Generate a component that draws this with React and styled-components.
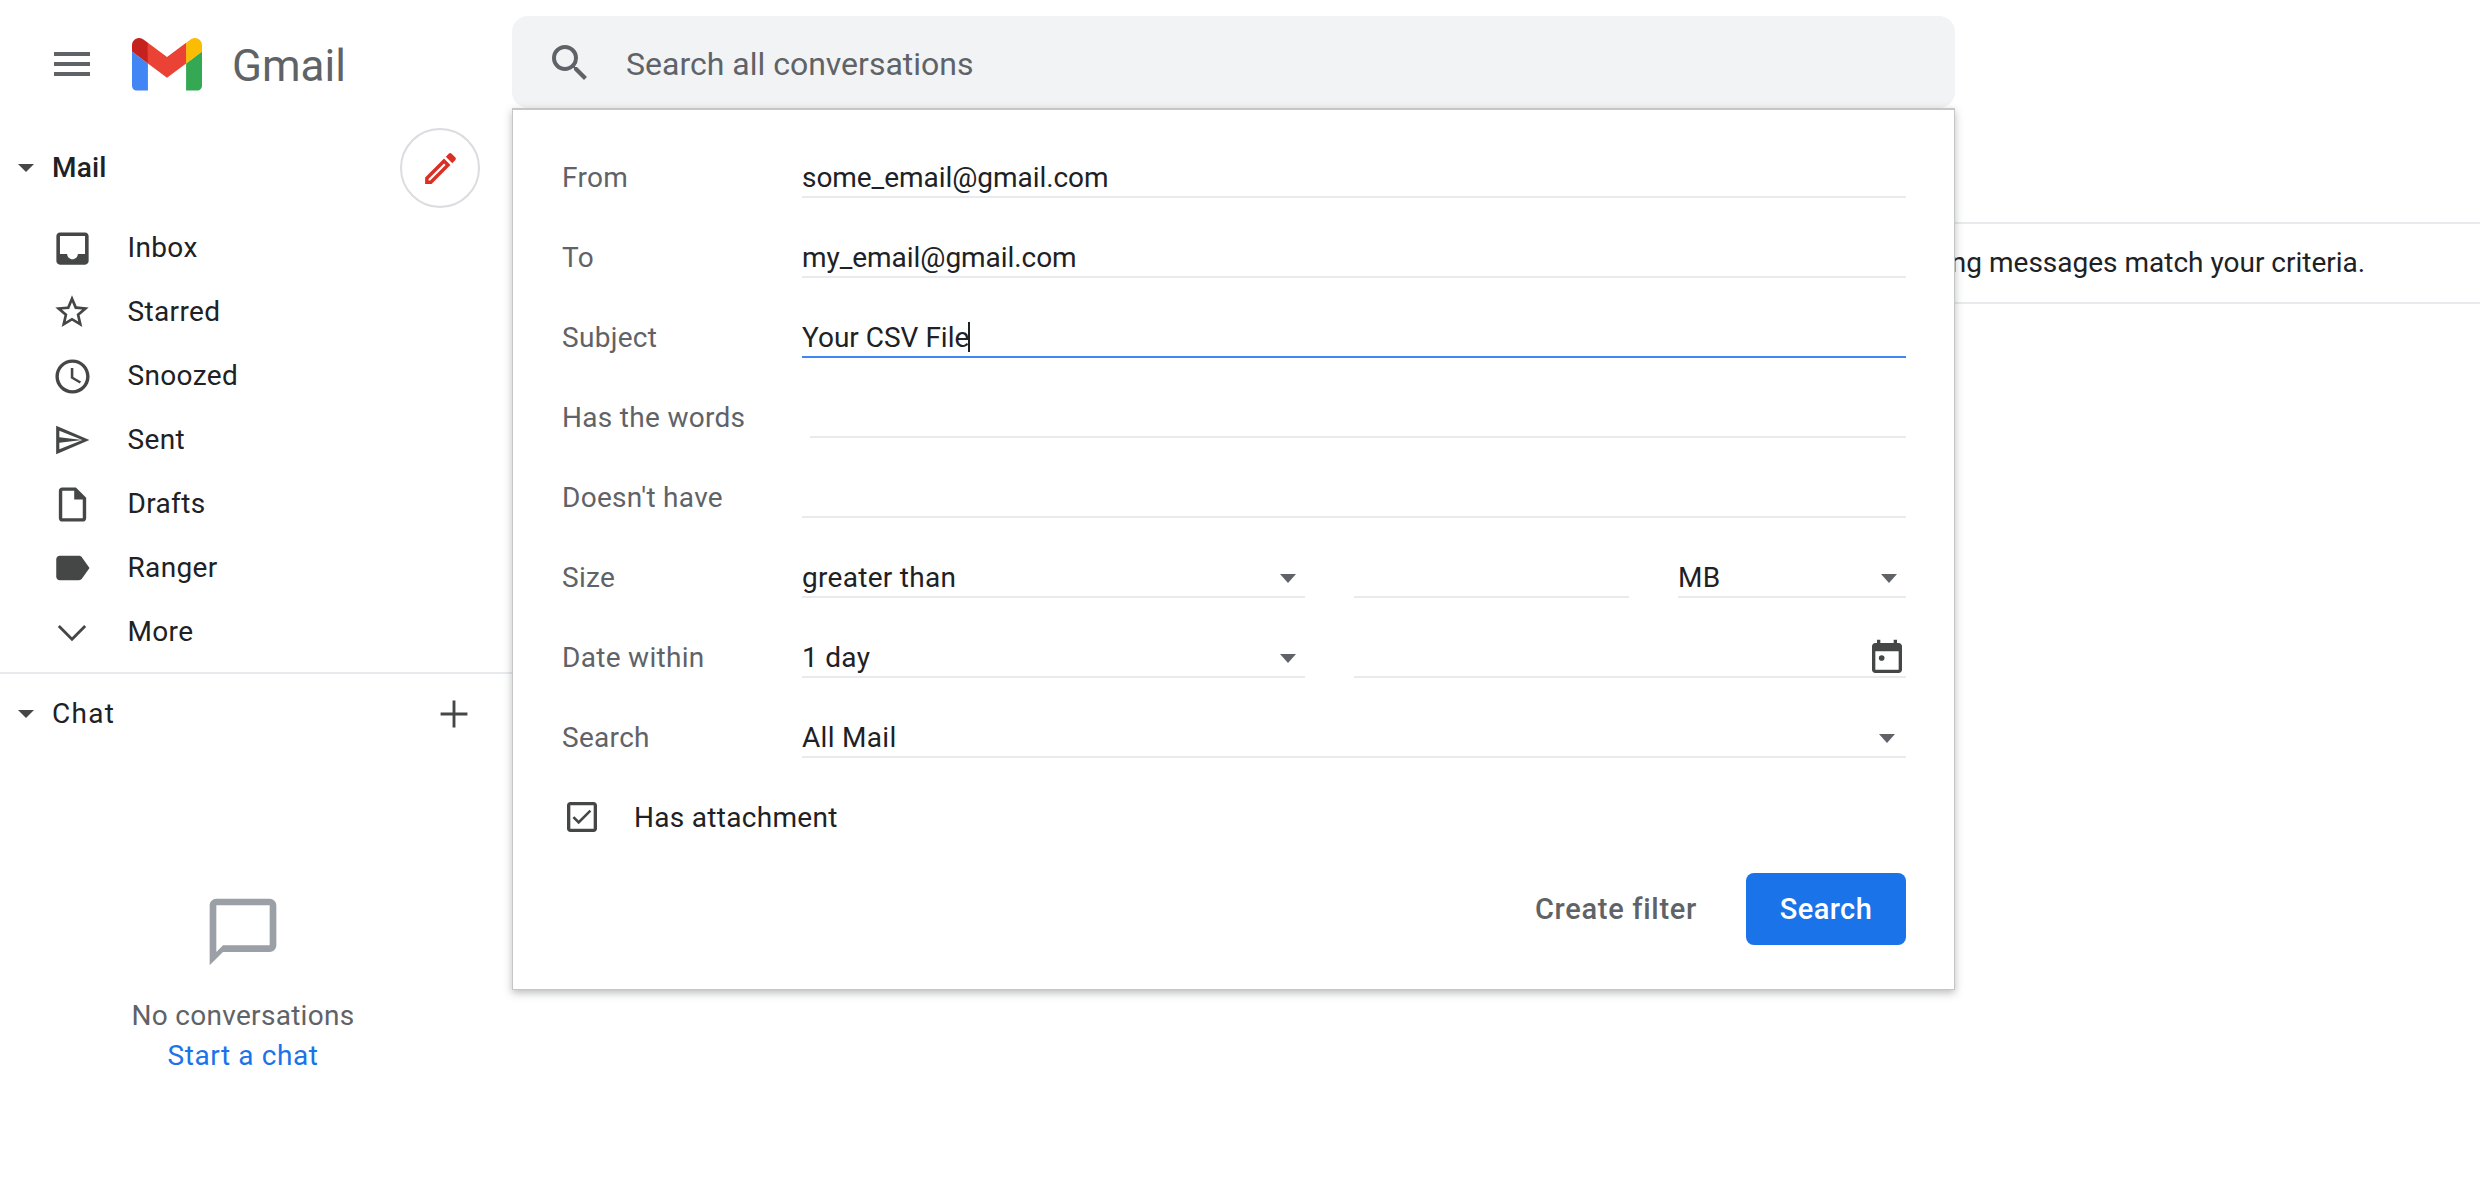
import React from 'react';
import styled, { createGlobalStyle } from 'styled-components';

const Global = createGlobalStyle`
  html, body { margin: 0; padding: 0; background: #fff; }
  body { font-family: Roboto, "Liberation Sans", sans-serif; color: #202124; -webkit-font-smoothing: antialiased; }
  * { box-sizing: border-box; }
`;

const Page = styled.div`display: flex; width: 2480px; height: 1182px; overflow: hidden; background: #fff;`;
const Sidebar = styled.aside`width: 512px; flex: none; display: flex; flex-direction: column;`;
const Brand = styled.div`height: 128px; padding: 40px 0 0 48px; display: flex; align-items: flex-start;`;
const MenuButton = styled.div`width: 48px; height: 48px; display: flex; color: #5f6368;`;
const Logo = styled.svg`width: 70px; height: 52.5px; margin: -2px 0 0 36px; flex: none;`;
const Wordmark = styled.span`margin: 2px 0 0 30px; font-size: 44px; line-height: 48px; color: #5f6368;`;
const SectionHead = styled.div`display: flex; align-items: center; height: ${p => p.$h}px; padding-left: 18px; padding-right: ${p => p.$pr}px; margin-bottom: ${p => p.$mb || 0}px;`;
const SectionCaret = styled.svg`width: 16px; height: 8px; flex: none; fill: #444746;`;
const SectionTitle = styled.span`margin-left: 18px; flex: 1; font-size: 28px; line-height: 36px; font-weight: ${p => p.$weight}; letter-spacing: ${p => p.$ls}px; color: #202124;`;
const Compose = styled.div`width: 80px; height: 80px; border: 2px solid #dadce0; border-radius: 50%; display: flex; align-items: center; justify-content: center; color: #d93025;`;
const NavList = styled.nav`display: flex; flex-direction: column;`;
const NavRow = styled.div`height: 64px; display: flex; align-items: center; padding-left: 44px;`;
const NavIcon = styled.div`width: 56px; display: flex; justify-content: center; align-items: center; color: #444746; flex: none;`;
const NavLabel = styled.span`margin-left: 27.5px; font-size: 28px; line-height: 36px; letter-spacing: 0.35px; color: #202124;`;
const PlusIcon = styled.div`width: 46px; height: 46px; display: flex; color: #444746; flex: none;`;
const Divider = styled.hr`margin: 8px 0 0; border: 0; height: 2px; background: #e8eaed;`;
const Empty = styled.div`margin-top: 138px; padding-right: 26px; display: flex; flex-direction: column; align-items: center;`;
const EmptyText = styled.div`margin-top: 24px; font-size: 28px; line-height: 40px; color: #5f6368; letter-spacing: 0.3px;`;
const StartLink = styled.a`font-size: 28px; line-height: 40px; color: #1a73e8; letter-spacing: 0.6px;`;

const Main = styled.main`flex: 1; position: relative; min-width: 0;`;
const SearchBar = styled.div`margin-top: 16px; width: 1443px; height: 92px; border-radius: 16px; background: #f1f3f4; display: flex; align-items: center; padding: 2px 0 0 34px; color: #5f6368;`;
const SearchText = styled.span`margin: 2px 0 0 32px; font-size: 32px; color: #5f6368;`;
const ResultRow = styled.div`margin-top: 114px; height: 82px; border-top: 2px solid #e8eaed; border-bottom: 2px solid #e8eaed; display: flex; align-items: center; padding: 0 0 2px 1330px; font-size: 28px; white-space: nowrap; color: #202124;`;

const Popover = styled.div`position: absolute; left: 0; top: 108px; width: 1443px; background: #fff; border: 1px solid #c6c6c6; border-top-width: 2px; box-shadow: 0 3px 8px rgba(60,64,67,.35); padding: 8px 48px 44px 49px;`;
const FormRow = styled.div`height: 80px; display: grid; grid-template-columns: 240px 1fr; align-items: end;`;
const Label = styled.div`font-size: 28px; line-height: 36px; padding-bottom: 2px; color: #5f6368; letter-spacing: 0.3px;`;
const FieldGroup = styled.div`display: flex; gap: 49px;`;
const Field = styled.div`
  height: 38px; width: ${p => (p.$width ? `${p.$width}px` : 'auto')}; flex: ${p => (p.$width ? 'none' : 1)};
  margin-left: ${p => p.$inset || 0}px; border-bottom: 2px solid ${p => (p.$focus ? '#4285f4' : '#e8eaed')};
  display: flex; align-items: center; justify-content: space-between; padding-right: ${p => p.$pr || 0}px;
  font-size: 28px; line-height: 36px; letter-spacing: ${p => p.$ls ?? 0.3}px; color: #202124;
`;
const Cursor = styled.i`display: inline-block; width: 2px; height: 30px; margin-left: -1px; vertical-align: -5px; background: #202124;`;
const DropArrow = styled.svg`width: 16px; height: 9px; fill: #5f6368; flex: none;`;
const CalendarIcon = styled.svg`width: 40px; height: 40px; flex: none; margin: -1px -1px 0 0; fill: #444746;`;
const CheckRow = styled.div`margin-top: 20px; height: 78px; display: flex; align-items: center;`;
const CheckIcon = styled.svg`width: 40px; height: 40px; flex: none; fill: #444746;`;
const CheckLabel = styled.span`margin-left: 32px; font-size: 28px; letter-spacing: 0.3px; color: #202124;`;
const Actions = styled.div`margin-top: 17px; display: flex; justify-content: flex-end; align-items: center;`;
const LinkButton = styled.button`border: 0; background: none; padding: 0; margin-right: 49px; font: 500 29px Roboto, sans-serif; letter-spacing: 0.7px; color: #5f6368;`;
const PrimaryButton = styled.button`width: 160px; height: 72px; border: 0; border-radius: 8px; background: #1a73e8; color: #fff; font: 500 29px Roboto, sans-serif; letter-spacing: 0.4px;`;

const Icon = ({ size, d, evenodd }) => (
  <svg width={size} height={size} viewBox="0 0 24 24" fill="currentColor"><path d={d} fillRule={evenodd ? 'evenodd' : 'nonzero'} /></svg>
);
const Down = () => <SectionCaret viewBox="0 0 16 8"><path d="M0 0h16L8 8z" /></SectionCaret>;
const Arrow = () => <DropArrow viewBox="0 0 16 9"><path d="M0 0h16L8 9z" /></DropArrow>;

const nav = [
  ['Inbox', 43, 'M19 3H5c-1.1 0-2 .9-2 2v14c0 1.1.9 2 2 2h14c1.1 0 2-.9 2-2V5c0-1.1-.9-2-2-2zm0 12h-4c0 1.66-1.34 3-3 3s-3-1.34-3-3H5V5h14v10z'],
  ['Starred', 40, 'M22 9.24l-7.19-.62L12 2 9.19 8.63 2 9.24l5.46 4.73L5.82 21 12 17.27 18.18 21l-1.63-7.03L22 9.24zM12 15.4l-3.76 2.27 1-4.28-3.32-2.88 4.38-.38L12 6.1l1.71 4.04 4.38.38-3.32 2.88 1 4.28L12 15.4z'],
  ['Snoozed', 41, 'M11.99 2C6.47 2 2 6.48 2 12s4.47 10 9.99 10C17.52 22 22 17.52 22 12S17.52 2 11.99 2zM12 20c-4.42 0-8-3.58-8-8s3.58-8 8-8 8 3.58 8 8-3.58 8-8 8zm.5-13H11v6l5.25 3.15.75-1.23-4.5-2.67z'],
  ['Sent', 38, 'M2 3L23 12 2 21zM4 6.1L18.6 12 4 10.2zM4 17.9V13.8L18.6 12z', true],
  ['Drafts', 41, 'M14 2H6c-1.1 0-1.99.9-1.99 2L4 20c0 1.1.89 2 1.99 2H18c1.1 0 2-.9 2-2V8l-6-6zM6 20V4h7v5h5v11H6z'],
  ['Ranger', 42, 'M17.63 5.84C17.27 5.33 16.67 5 16 5L5 5.01C3.9 5.01 3 5.9 3 7v10c0 1.1.9 1.99 2 1.99L16 19c.67 0 1.27-.33 1.63-.84L22 12l-4.37-6.16z'],
  ['More', 54, 'M17.4 8.9 12 14.3 6.6 8.9l-.9.9 6.3 6.3 6.3-6.3z'],
];

export default function App() {
  return (
    <Page>
      <Global />
      <Sidebar>
        <Brand>
          <MenuButton><Icon size={48} d="M3 18h18v-2H3v2zm0-5h18v-2H3v2zm0-7v2h18V6H3z" /></MenuButton>
          <Logo viewBox="52 42 88 66">
            <path fill="#4285f4" d="M58 108h14V74L52 59v43c0 3.32 2.69 6 6 6" />
            <path fill="#34a853" d="M120 108h14c3.32 0 6-2.69 6-6V59l-20 15" />
            <path fill="#fbbc04" d="M120 48v26l20-15v-8c0-7.42-8.47-11.65-14.4-7.2" />
            <path fill="#ea4335" d="M72 74V48l24 18 24-18v26L96 92" />
            <path fill="#c5221f" d="M52 51v8l20 15V48l-5.6-4.2c-5.94-4.45-14.4-.22-14.4 7.2" />
          </Logo>
          <Wordmark>Gmail</Wordmark>
        </Brand>
        <SectionHead $h={80} $pr={32} $mb={8}>
          <Down />
          <SectionTitle $weight={500} $ls={0.2}>Mail</SectionTitle>
          <Compose>
            <Icon size={41} d="M3 17.25V21h3.75L17.81 9.94l-3.75-3.75L3 17.25zM5.92 19H5v-.92l9.06-9.06.92.92L5.92 19zM20.71 5.63l-2.34-2.34c-.39-.39-1.02-.39-1.41 0l-1.83 1.83 3.75 3.75 1.83-1.83c.39-.39.39-1.02 0-1.41z" />
          </Compose>
        </SectionHead>
        <NavList>
          {nav.map(([label, size, d, evenodd]) => (
            <NavRow key={label}>
              <NavIcon><Icon size={size} d={d} evenodd={evenodd} /></NavIcon>
              <NavLabel>{label}</NavLabel>
            </NavRow>
          ))}
        </NavList>
        <Divider />
        <SectionHead $h={80} $pr={35}>
          <Down />
          <SectionTitle $weight={400} $ls={1.3}>Chat</SectionTitle>
          <PlusIcon><Icon size={46} d="M19 12.75h-6.25V19h-1.5v-6.25H5v-1.5h6.25V5h1.5v6.25H19z" /></PlusIcon>
        </SectionHead>
        <Empty>
          <svg width="80" height="80" viewBox="0 0 24 24" fill="#9aa0a6"><path d="M20 2H4c-1.1 0-2 .9-2 2v18l4-4h14c1.1 0 2-.9 2-2V4c0-1.1-.9-2-2-2zm0 14H6l-2 2V4h16v12z" /></svg>
          <EmptyText>No conversations</EmptyText>
          <StartLink>Start a chat</StartLink>
        </Empty>
      </Sidebar>
      <Main>
        <SearchBar>
          <Icon size={48} d="M15.5 14h-.79l-.28-.27A6.471 6.471 0 0 0 16 9.5 6.5 6.5 0 1 0 9.5 16c1.61 0 3.09-.59 4.23-1.57l.27.28v.79l5 4.99L20.49 19l-4.99-5zm-6 0C7.01 14 5 11.99 5 9.5S7.01 5 9.5 5 14 7.01 14 9.5 11.99 14 9.5 14z" />
          <SearchText>Search all conversations</SearchText>
        </SearchBar>
        <ResultRow>No existing messages match your criteria.</ResultRow>
        <Popover>
          <FormRow><Label>From</Label><Field $ls={-0.05}>some_email@gmail.com</Field></FormRow>
          <FormRow><Label>To</Label><Field $ls={-0.05}>my_email@gmail.com</Field></FormRow>
          <FormRow><Label>Subject</Label><Field $focus $ls={0}><span>Your CSV File<Cursor /></span></Field></FormRow>
          <FormRow><Label>Has the words</Label><Field $inset={8} /></FormRow>
          <FormRow><Label>Doesn't have</Label><Field /></FormRow>
          <FormRow>
            <Label>Size</Label>
            <FieldGroup>
              <Field $width={503} $pr={9}>greater than<Arrow /></Field>
              <Field $width={275} />
              <Field $pr={9}>MB<Arrow /></Field>
            </FieldGroup>
          </FormRow>
          <FormRow>
            <Label>Date within</Label>
            <FieldGroup>
              <Field $width={503} $pr={9}>1 day<Arrow /></Field>
              <Field>
                <span />
                <CalendarIcon viewBox="0 0 24 24">
                  <path d="M16 1v2H8V1H6v2H5c-1.11 0-1.99.9-1.99 2L3 19c0 1.1.89 2 2 2h14c1.1 0 2-.9 2-2V5c0-1.1-.9-2-2-2h-1V1h-2zm3 18H5V8h14v11z" />
                  <circle cx="8.8" cy="12" r="1.7" />
                </CalendarIcon>
              </Field>
            </FieldGroup>
          </FormRow>
          <FormRow><Label>Search</Label><Field $pr={11}>All Mail<Arrow /></Field></FormRow>
          <CheckRow>
            <CheckIcon viewBox="0 0 24 24">
              <path d="M19 3H5c-1.11 0-2 .9-2 2v14c0 1.1.89 2 2 2h14c1.11 0 2-.9 2-2V5c0-1.1-.89-2-2-2zm0 16H5V5h14v14z" />
              <path d="M17.6 8.7l-1.1-1.1-6.5 6.5-2.6-2.6-1.1 1.1 3.7 3.7z" />
            </CheckIcon>
            <CheckLabel>Has attachment</CheckLabel>
          </CheckRow>
          <Actions>
            <LinkButton>Create filter</LinkButton>
            <PrimaryButton>Search</PrimaryButton>
          </Actions>
        </Popover>
      </Main>
    </Page>
  );
}
